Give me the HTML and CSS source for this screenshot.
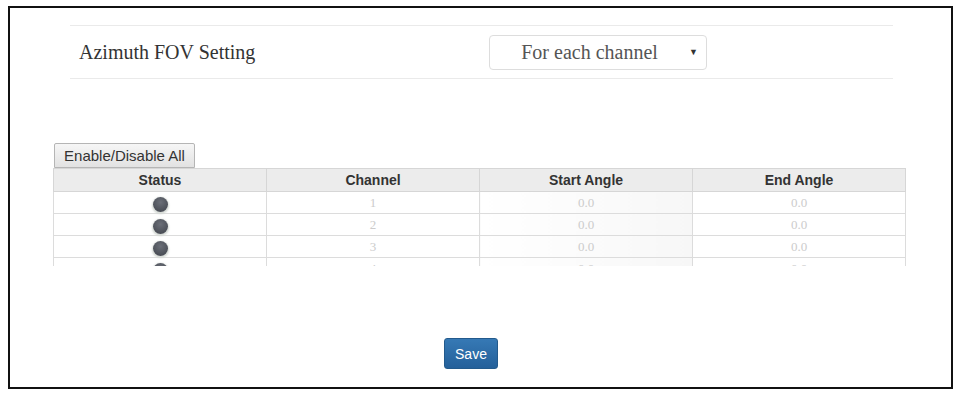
FILE: index.html
```html
<!DOCTYPE html>
<html lang="en">
<head>
    <meta charset="UTF-8">
    <title>Azimuth FOV Setting</title>
    <link rel="stylesheet" href="styles.css">
</head>
<body>

<div class="frame">
    <!-- FOV setting row -->
    <div class="setting">
        <div class="setting-label">Azimuth FOV Setting</div>
        <div class="select">
            <span>For each channel</span>
            <span class="caret">&#9660;</span>
        </div>
    </div>

    <!-- Channel table -->
    <div class="channels">
        <button class="toggle-all">Enable/Disable All</button>
        <div class="table-wrap">
            <table>
                <thead>
                    <tr><th>Status</th><th>Channel</th><th>Start Angle</th><th>End Angle</th></tr>
                </thead>
                <tbody>
                    <tr><td><span class="dot"></span></td><td>1</td><td class="start">0.0</td><td>0.0</td></tr>
                    <tr><td><span class="dot"></span></td><td>2</td><td class="start">0.0</td><td>0.0</td></tr>
                    <tr><td><span class="dot"></span></td><td>3</td><td class="start">0.0</td><td>0.0</td></tr>
                    <tr><td><span class="dot"></span></td><td>4</td><td class="start">0.0</td><td>0.0</td></tr>
                </tbody>
            </table>
        </div>
    </div>

    <button class="save">Save</button>
</div>

</body>
</html>
```

FILE: styles.css
```css
body {
    margin: 0;
    padding: 0;
    background-color: #fff;
    font-family: "Liberation Sans", Arial, sans-serif;
}

.frame {
    margin: 6px 0 0 8px;
    width: 941px;
    height: 379px;
    border: 2px solid #111;
}

.setting {
    display: flex;
    align-items: center;
    height: 52px;
    margin: 17px 58px 0 60px;
    border-top: 1px solid #eaeaea;
    border-bottom: 1px solid #eaeaea;
}

.setting-label {
    width: 410px;
    padding-left: 9px;
    font-family: "Liberation Serif", "Times New Roman", serif;
    font-size: 20px;
    color: #333;
}

.select {
    display: flex;
    align-items: center;
    justify-content: space-between;
    box-sizing: border-box;
    width: 218px;
    height: 35px;
    padding: 0 8px 0 0;
    border: 1px solid #ddd;
    border-radius: 4px;
    font-family: "Liberation Serif", "Times New Roman", serif;
    font-size: 20px;
    color: #555;
}

.select span:first-child {
    flex: 1;
    text-align: center;
}

.caret {
    font-size: 9px;
    color: #333;
}

.channels {
    margin: 64px 0 0 43px;
    width: 853px;
}

.toggle-all {
    display: block;
    margin: 0 0 0 1px;
    width: 141px;
    height: 25px;
    padding: 0;
    border: 1px solid #b5b5b5;
    border-radius: 2px 2px 0 0;
    background: linear-gradient(#f6f6f6, #e2e2e2);
    font-family: "Liberation Sans", Arial, sans-serif;
    font-size: 15px;
    color: #333;
}

.table-wrap {
    height: 98px;
    overflow: hidden;
}

table {
    width: 100%;
    border-collapse: collapse;
    table-layout: fixed;
}

th {
    height: 22px;
    padding: 0;
    background-color: #ececec;
    border: 1px solid #d6d6d6;
    font-size: 14px;
    font-weight: bold;
    color: #333;
}

td {
    height: 21px;
    padding: 0;
    border: 1px solid #dcdcdc;
    text-align: center;
    font-family: "Liberation Serif", "Times New Roman", serif;
    font-size: 13px;
    color: #ccc;
}

td.start {
    background: linear-gradient(90deg, #fff, #f7f7f7);
}

.dot {
    display: inline-block;
    width: 15px;
    height: 15px;
    margin-top: 3px;
    border-radius: 50%;
    background: radial-gradient(circle at 50% 35%, #6b6f78, #3e424a);
    box-shadow: 0 1px 2px 1px #d3d8d3;
    vertical-align: top;
}

.save {
    display: block;
    margin: 72px 0 0 434px;
    width: 54px;
    height: 31px;
    padding: 0;
    border: 1px solid #235a8c;
    border-radius: 3px;
    background: linear-gradient(#3679b5, #24609a);
    color: #fff;
    font-family: "Liberation Sans", Arial, sans-serif;
    font-size: 14px;
}
```
